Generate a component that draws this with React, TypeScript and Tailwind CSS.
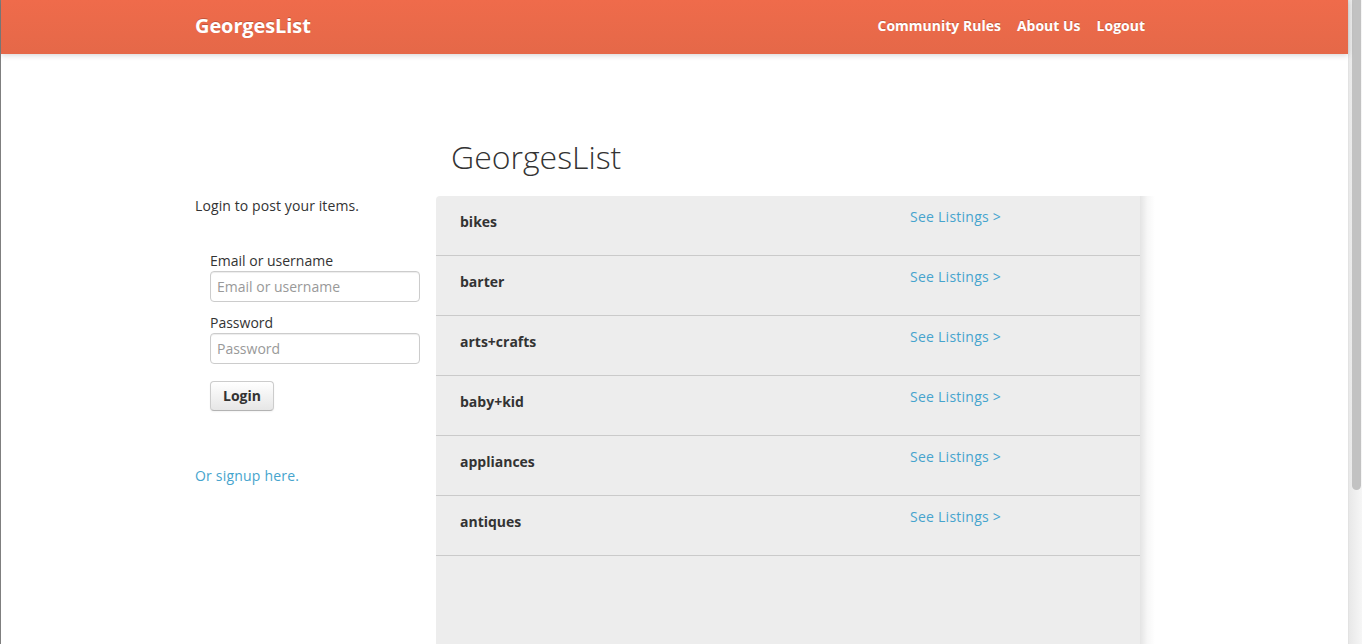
import React from 'react';

const categories = ['bikes', 'barter', 'arts+crafts', 'baby+kid', 'appliances', 'antiques'];

function Navbar() {
  return (
    <div className="relative z-10 shrink-0 h-[54px] bg-gradient-to-b from-[#ef6b4b] to-[#e56848] shadow-[0_1px_6px_rgba(0,0,0,0.18)]">
      <div className="flex items-center h-full pl-[194px] pr-[203px] text-white font-bold [text-shadow:0_-1px_0_rgba(0,0,0,0.2)]">
        <span className="text-[20px] leading-[26px] tracking-[-0.1px] mb-[3px]">GeorgesList</span>
        <div className="ml-auto flex gap-[16px] text-[14px] mb-[3px]">
          <span>Community Rules</span>
          <span>About Us</span>
          <span>Logout</span>
        </div>
      </div>
    </div>
  );
}

function LoginForm() {
  return (
    <div className="w-[241px] shrink-0 pt-[142px] text-[14px] leading-[20px] text-[#333]">
      <p className="tracking-[0.1px]">Login to post your items.</p>
      <div className="pl-[15px] mt-[35px]">
        <label className="block">Email or username</label>
        <input
          className="block w-[210px] h-[31px] px-[6px] border border-[#ccc] rounded-[4px] text-[14px] placeholder:text-[#999] shadow-[inset_0_1px_1px_rgba(0,0,0,0.075)] outline-none"
          placeholder="Email or username"
        />
        <label className="block mt-[11px]">Password</label>
        <input
          type="password"
          className="block w-[210px] h-[31px] px-[6px] border border-[#ccc] rounded-[4px] text-[14px] placeholder:text-[#999] shadow-[inset_0_1px_1px_rgba(0,0,0,0.075)] outline-none"
          placeholder="Password"
        />
        <button className="mt-[17px] w-[64px] h-[30px] font-bold text-[14px] text-[#333] rounded-[4px] border border-[#ccc] border-b-[#b3b3b3] bg-gradient-to-b from-white to-[#e6e6e6] shadow-[inset_0_1px_0_rgba(255,255,255,0.2),0_1px_2px_rgba(0,0,0,0.05)]">
          Login
        </button>
      </div>
      <a className="block mt-[55px] text-[#46a4cd] tracking-[0.2px]">Or signup here.</a>
    </div>
  );
}

function Listings() {
  return (
    <div className="flex-1 flex flex-col">
      <h1 className="mt-[83px] pl-[15px] text-[32px] leading-[40px] font-light text-[#333]">GeorgesList</h1>
      <div className="mt-[19px] flex flex-1">
        <div className="w-[704px] min-h-[460px] bg-[#ededed] rounded-tl-[4px]">
          {categories.map((c) => (
            <div key={c} className="h-[60px] flex border-b border-[#cacaca] text-[14px] leading-[20px]">
              <span className="w-[474px] pl-[24px] pt-[16px] font-bold text-[#333]">{c}</span>
              <a className="pt-[11px] text-[#46a4cd] tracking-[0.25px]">See Listings &gt;</a>
            </div>
          ))}
        </div>
        <div className="w-[15px] bg-gradient-to-r from-[#e4e4e4] via-[#f7f7f7] to-white" />
        <div className="flex-1 bg-white" />
      </div>
    </div>
  );
}

export default function App() {
  return (
    <div className="flex h-[644px] overflow-hidden bg-white font-['Open_Sans',sans-serif]">
      <div className="w-[1px] bg-[#7f7f7f] shrink-0" />
      <div className="flex-1 flex flex-col">
        <Navbar />
        <div className="flex flex-1 pl-[194px]">
          <LoginForm />
          <Listings />
        </div>
      </div>
      <div className="w-[14px] shrink-0 flex bg-gradient-to-r from-[#e8e8e8] to-[#f6f6f6] border-l border-[#e2e2e2]">
        <div className="ml-[3px] w-[9px] h-[490px] rounded-b-[5px] bg-[#c2c2c2]" />
      </div>
    </div>
  );
}
